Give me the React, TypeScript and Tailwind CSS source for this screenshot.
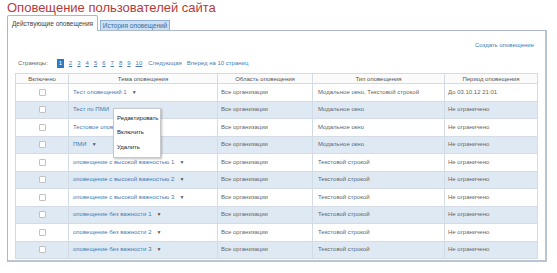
import React from 'react';

type Row = {
    title: string;
    area: string;
    kind: string;
    period: string;
};

const rows: Row[] = [
    { title: 'Тест оповещений 1', area: 'Все организации', kind: 'Модальное окно, Текстовой строкой', period: 'До 03.10.12 21:01' },
    { title: 'Тест по ПМИ', area: 'Все организации', kind: 'Модальное окно', period: 'Не ограничено' },
    { title: 'Тестовое оповещение', area: 'Все организации', kind: 'Модальное окно', period: 'Не ограничено' },
    { title: 'ПМИ', area: 'Все организации', kind: 'Модальное окно', period: 'Не ограничено' },
    { title: 'оповещение с высокой важностью 1', area: 'Все организации', kind: 'Текстовой строкой', period: 'Не ограничено' },
    { title: 'оповещение с высокой важностью 2', area: 'Все организации', kind: 'Текстовой строкой', period: 'Не ограничено' },
    { title: 'оповещение с высокой важностью 3', area: 'Все организации', kind: 'Текстовой строкой', period: 'Не ограничено' },
    { title: 'оповещение без важности 1', area: 'Все организации', kind: 'Текстовой строкой', period: 'Не ограничено' },
    { title: 'оповещение без важности 2', area: 'Все организации', kind: 'Текстовой строкой', period: 'Не ограничено' },
    { title: 'оповещение без важности 3', area: 'Все организации', kind: 'Текстовой строкой', period: 'Не ограничено' },
];

const pages = ['2', '3', '4', '5', '6', '7', '8', '9', '10'];

const Arrow = () => <span className="ml-[5px] text-[5px] text-[#555]">▼</span>;

export default function App() {
    return (
        <div
            className="w-[557px] h-[273px] bg-white overflow-hidden px-[7px] pt-[1px]"
            style={{ fontFamily: '"Liberation Sans", Arial, sans-serif' }}
        >
            <h1 className="text-[13px] leading-[14px] text-[#b83a3a]">Оповещение пользователей сайта</h1>

            <div className="flex items-end h-[16px]">
                <div className="relative z-10 h-[16px] w-[91px] border border-b-0 border-[#a9b9cb] bg-white rounded-t-[2px] text-[6.5px] text-[#444] flex items-center justify-center">
                    Действующие оповещения
                </div>
                <div className="ml-[2px] h-[11px] w-[70px] border border-b-0 border-[#8fb0d8] bg-[#cfdff2] text-[6.5px] text-[#3a6ea5] flex items-center justify-center">
                    История оповещений
                </div>
            </div>

            <div className="relative w-[540px] h-[232px] -mt-[1px] border border-[#a9b9cb] border-r-2 border-b-2 border-r-[#b8c4d2] border-b-[#b8c4d2] pl-[7px] pr-[9px]">
                <div className="flex justify-end h-[22px] items-end pb-[3px] pr-[2px]">
                    <span className="text-[6px] text-[#4a7bb0]">Создать оповещение</span>
                </div>

                <div className="flex items-center h-[20px] text-[6px] pl-[3px]">
                    <span className="text-[#666] mr-[9px]">Страницы:</span>
                    <span className="w-[7px] h-[9px] bg-[#2f79c4] text-white flex items-center justify-center">1</span>
                    {pages.map(p => (
                        <span key={p} className="ml-[5px] text-[#4a7bb0] underline">
                            {p}
                        </span>
                    ))}
                    <span className="ml-[6px] text-[#4a7bb0]">Следующая</span>
                    <span className="ml-[5px] text-[#4a7bb0]">Вперед на 10 страниц</span>
                </div>

                <table className="w-[522px] border-collapse text-[6px] text-[#666] table-fixed">
                    <colgroup>
                        <col className="w-[53px]" />
                        <col className="w-[149px]" />
                        <col className="w-[95px]" />
                        <col className="w-[132px]" />
                        <col className="w-[93px]" />
                    </colgroup>
                    <thead>
                        <tr className="h-[10px] bg-[#fbfbfb]">
                            {['Включено', 'Тема оповещения', 'Область оповещения', 'Тип оповещения', 'Период оповещения'].map(h => (
                                <th key={h} className="border border-[#d3dbe4] font-normal text-center text-[#555] leading-[8px]">
                                    {h}
                                </th>
                            ))}
                        </tr>
                    </thead>
                    <tbody>
                        {rows.map((r, i) => (
                            <tr key={r.title} className={i % 2 === 1 ? 'h-[17.5px] bg-[#dfe9f4]' : 'h-[17.5px] bg-white'}>
                                <td className="border border-[#d3dbe4] text-center">
                                    <span className="inline-block w-[7px] h-[7px] border border-[#c2c2c2] bg-white align-middle rounded-[1px]" />
                                </td>
                                <td className="border border-[#d3dbe4] pl-[4px] text-[#4a7bb0] whitespace-nowrap">
                                    {r.title}
                                    <Arrow />
                                </td>
                                <td className="border border-[#d3dbe4] pl-[3px] whitespace-nowrap">{r.area}</td>
                                <td className="border border-[#d3dbe4] pl-[5px] whitespace-nowrap">{r.kind}</td>
                                <td className="border border-[#d3dbe4] pl-[3px] whitespace-nowrap">{r.period}</td>
                            </tr>
                        ))}
                    </tbody>
                </table>

                <div className="absolute left-[105px] top-[77px] w-[48px] h-[50px] bg-white border border-[#c8c8c8] shadow-[1px_1px_2px_rgba(0,0,0,0.25)] text-[6px] text-[#222] flex flex-col justify-around pl-[3px] py-[2px]">
                    <span>Редактировать</span>
                    <span>Включить</span>
                    <span>Удалить</span>
                </div>
            </div>
        </div>
    );
}
